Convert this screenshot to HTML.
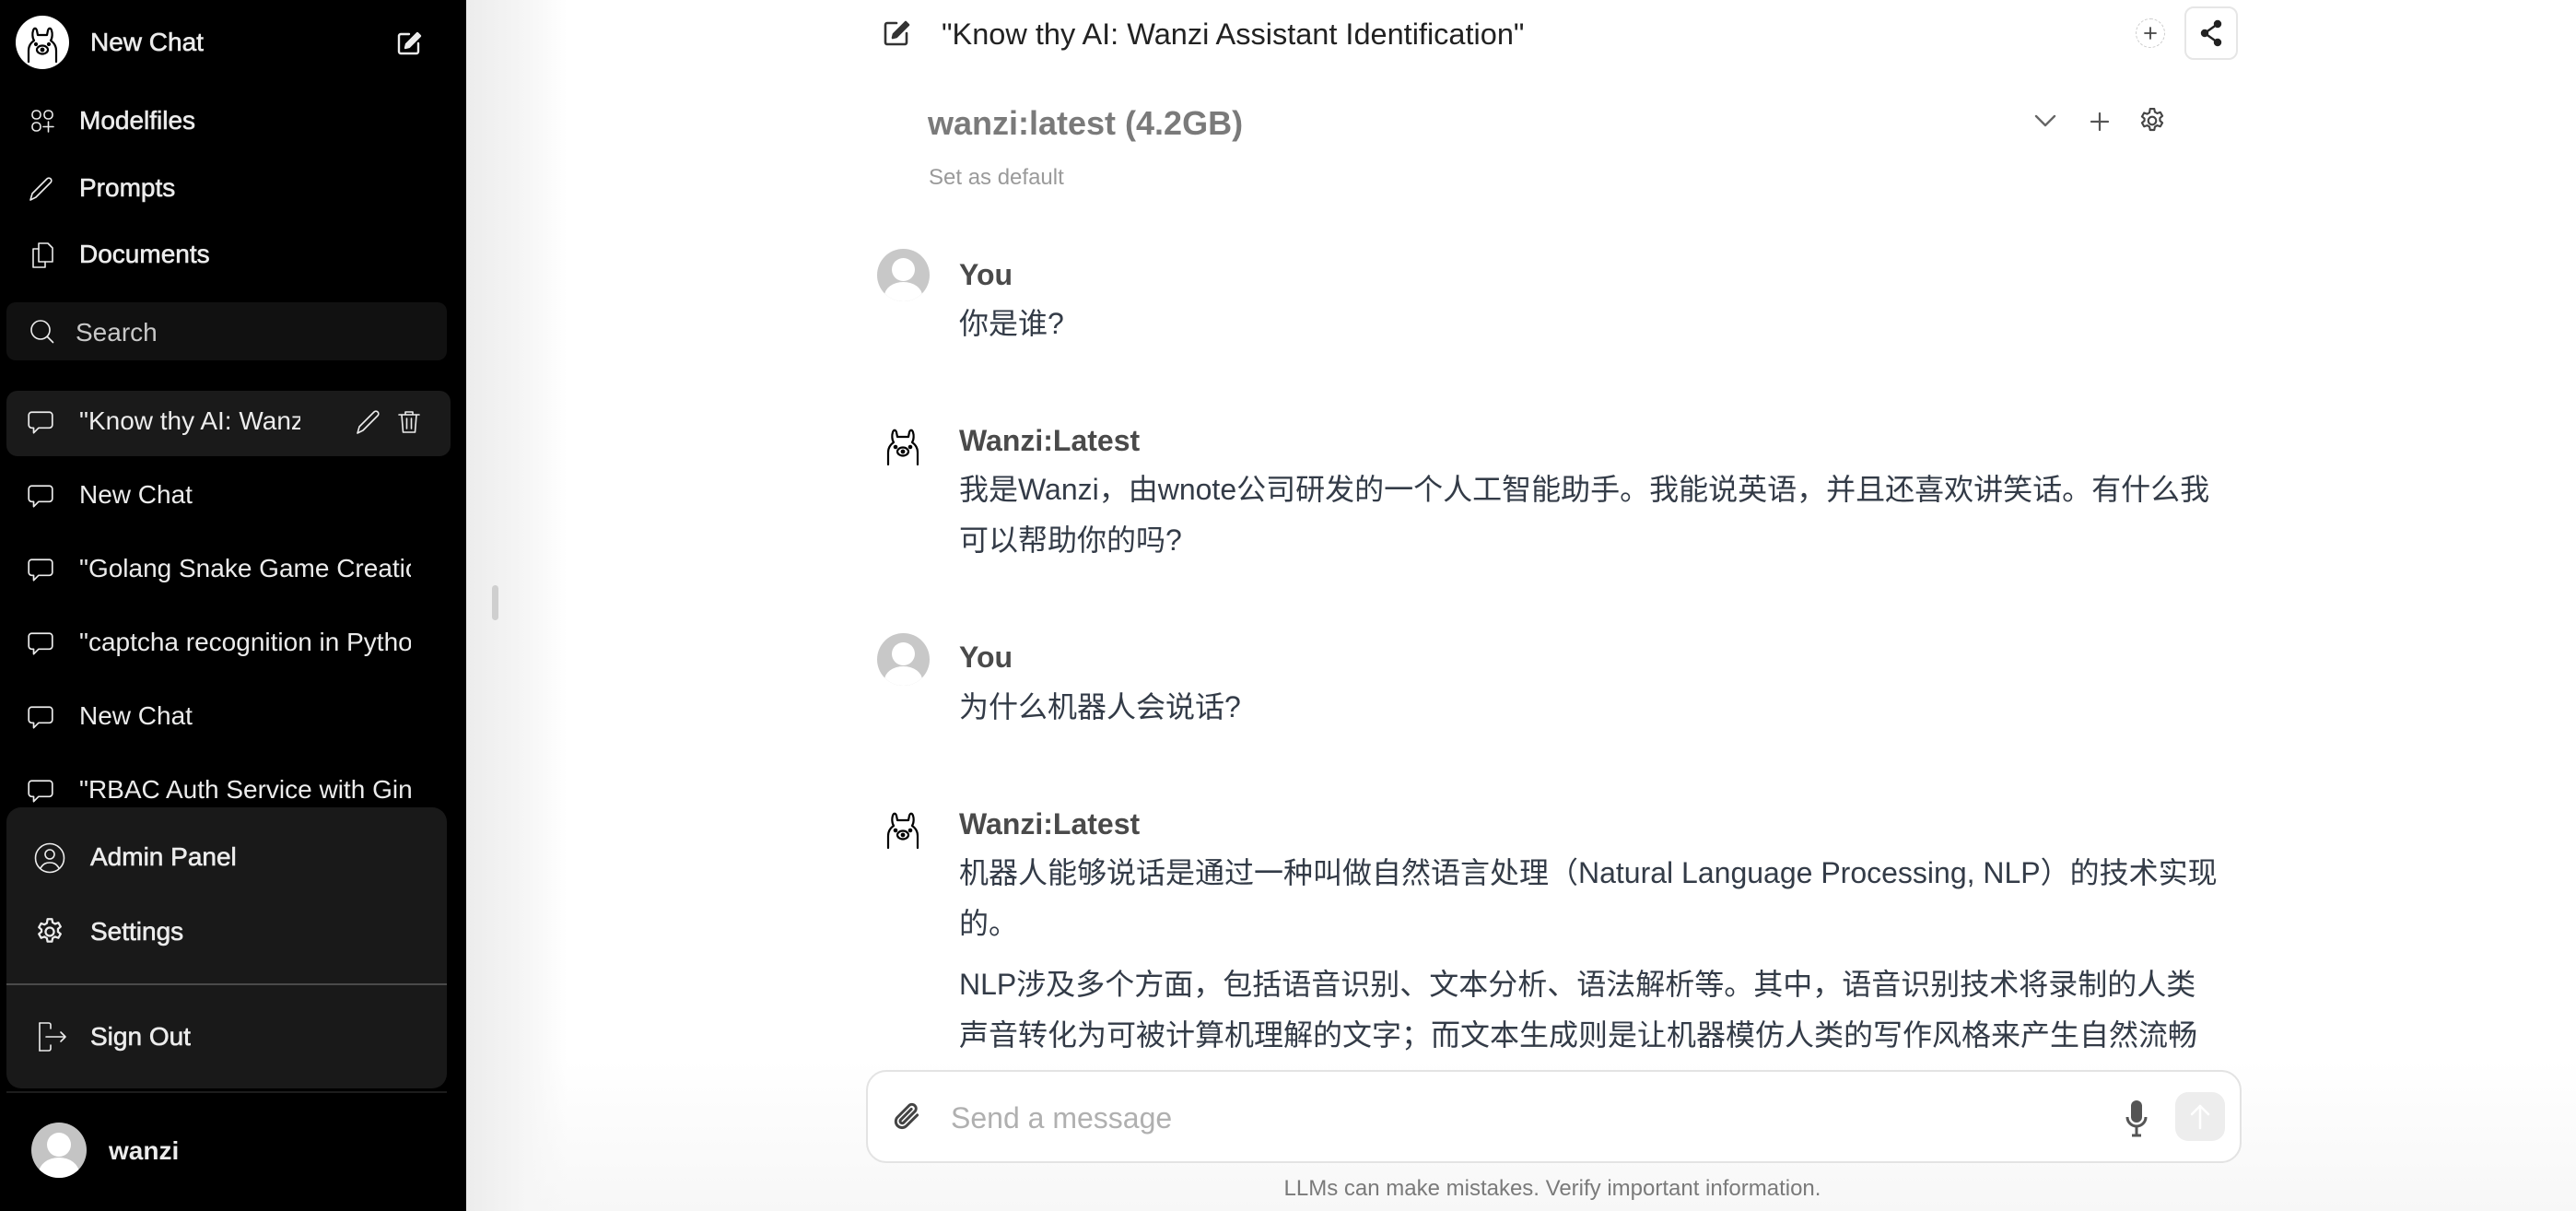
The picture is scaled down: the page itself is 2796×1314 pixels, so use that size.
<!DOCTYPE html>
<html><head><meta charset="utf-8"><style>
*{box-sizing:border-box;margin:0;padding:0}
body{width:2796px;height:1314px;overflow:hidden;background:#fff;font-family:"Liberation Sans","Noto Sans CJK SC",sans-serif;position:relative}
.a{position:absolute;white-space:nowrap}
#sb{position:absolute;left:0;top:0;width:506px;height:1314px;background:#000;color:#ececec}
.nav{font-size:28px;line-height:1;-webkit-text-stroke:0.6px #ececec}
.li{font-size:28px;line-height:1;overflow:hidden;color:#ececec}
svg.i{position:absolute;fill:none;stroke:#ececec;stroke-width:1.6;stroke-linecap:round;stroke-linejoin:round}
.msg{font-size:32px;line-height:55px;color:#333b47}
.nm{font-size:32px;font-weight:bold;color:#4a4a4a;line-height:1}
</style></head><body>
<div class="a" style="left:506px;top:1150px;width:2290px;height:164px;background:linear-gradient(180deg,#fff,#f7f7f7)"></div>
<div class="a" style="left:506px;top:0;width:110px;height:1314px;background:linear-gradient(90deg,#ececec,#f6f6f6 60%,rgba(255,255,255,0))"></div>
<div class="a" style="left:534px;top:635px;width:7px;height:38px;border-radius:4px;background:#cfcfcf"></div>

<div id="sb">
 <div class="a" style="left:17px;top:17px;width:58px;height:58px;border-radius:50%;background:#fff"></div>
 <svg class="i" style="left:17px;top:17px;stroke:#000;stroke-width:2.2" width="58" height="58" viewBox="0 0 58 58"><path d="M14 50V38c0-6 3-9 6-11-2-3-2-8-1-11 1-3 3-3 4 0l1 5h10l1-5c1-3 3-3 4 0 1 3 1 8-1 11 3 2 6 5 6 11v12"/><ellipse cx="29" cy="37" rx="6" ry="4.5"/><circle cx="29" cy="37" r="1.3" fill="#000"/><circle cx="22" cy="31" r="1" fill="#000"/><circle cx="36" cy="31" r="1" fill="#000"/></svg>
 <div class="a nav" style="left:98px;top:32px">New Chat</div>
 <svg class="i" style="left:430px;top:33px;stroke-width:2.4" width="28" height="28" viewBox="0 0 28 28"><path d="M14 4H5a2 2 0 0 0-2 2v17a2 2 0 0 0 2 2h17a2 2 0 0 0 2-2v-9"/><path d="M23 3l3 3-12 12-4 1 1-4z" fill="#ececec"/></svg>

 <svg class="i" style="left:32px;top:117px" width="28" height="28" viewBox="0 0 28 28"><rect x="3" y="3" width="9" height="9" rx="4"/><rect x="16" y="3" width="9" height="9" rx="4"/><rect x="3" y="16" width="9" height="9" rx="4"/><path d="M20.5 15v11M15 20.5h11"/></svg>
 <div class="a nav" style="left:86px;top:117px">Modelfiles</div>
 <svg class="i" style="left:30px;top:190px" width="30" height="30" viewBox="0 0 30 30"><path d="M3 27l2-7L21 4a2.5 2.5 0 0 1 4 4L9 24z"/></svg>
 <div class="a nav" style="left:86px;top:190px">Prompts</div>
 <svg class="i" style="left:32px;top:262px" width="28" height="30" viewBox="0 0 28 30"><path d="M10 8H4v20h13v-6"/><path d="M10 2h10l5 5v15H10z"/></svg>
 <div class="a nav" style="left:86px;top:262px">Documents</div>

 <div class="a" style="left:7px;top:328px;width:478px;height:63px;border-radius:10px;background:#111"></div>
 <svg class="i" style="left:31px;top:345px" width="30" height="30" viewBox="0 0 30 30"><circle cx="13" cy="13" r="10"/><path d="M20.5 20.5l6 6"/></svg>
 <div class="a" style="left:82px;top:345px;font-size:28px;color:#c8c8c8">Search</div>

 <div class="a" style="left:7px;top:424px;width:482px;height:71px;border-radius:12px;background:#1a1a1a"></div>
 <div id="list"></div>

 <div class="a" style="left:7px;top:876px;width:478px;height:305px;border-radius:16px;background:#191919"></div>
 <svg class="i" style="left:37px;top:914px" width="34" height="34" viewBox="0 0 34 34"><circle cx="17" cy="17" r="15.5"/><circle cx="17" cy="13" r="5"/><path d="M7 28c3-5 6-6 10-6s7 1 10 6"/></svg>
 <div class="a nav" style="left:98px;top:916px">Admin Panel</div>
 <svg class="i" style="left:37px;top:994px" width="34" height="34" viewBox="0 0 24 24" stroke-width="1.3"><path d="M10.3 2.3h3.4l.5 2.6 1.9 1.1 2.5-.9 1.7 3-2 1.7v2.2l2 1.7-1.7 3-2.5-.9-1.9 1.1-.5 2.6h-3.4l-.5-2.6-1.9-1.1-2.5.9-1.7-3 2-1.7V10.3l-2-1.7 1.7-3 2.5.9 1.9-1.1z"/><circle cx="12" cy="12" r="3.2"/></svg>
 <div class="a nav" style="left:98px;top:997px">Settings</div>
 <div class="a" style="left:7px;top:1067px;width:478px;height:2px;background:#4a4a4a"></div>
 <svg class="i" style="left:38px;top:1107px" width="36" height="36" viewBox="0 0 36 36"><path d="M5 3v30"/><path d="M5 3h10a2 2 0 0 1 2 2v4M17 27v4a2 2 0 0 1-2 2H5"/><path d="M12 18h21M28 13l5 5-5 5"/></svg>
 <div class="a nav" style="left:98px;top:1111px">Sign Out</div>
 <div class="a" style="left:7px;top:1184px;width:478px;height:2px;background:#1c1c1c"></div>

 <div class="a" style="left:34px;top:1218px;width:60px;height:60px;border-radius:50%;background:#c4c4c4;overflow:hidden">
  <div class="a" style="left:17px;top:11px;width:26px;height:26px;border-radius:50%;background:#fff"></div>
  <div class="a" style="left:8px;top:38px;width:44px;height:34px;border-radius:50% 50% 0 0;background:#fff"></div>
 </div>
 <div class="a" style="left:118px;top:1233px;font-size:28px;font-weight:bold">wanzi</div>
</div>

<svg class="i" style="left:957px;top:20px;stroke:#333;stroke-width:2.6" width="32" height="32" viewBox="0 0 32 32"><path d="M16 5H6a2 2 0 0 0-2 2v19a2 2 0 0 0 2 2h19a2 2 0 0 0 2-2V16"/><path d="M26 4l3 3-13 13-4 1 1-4z" fill="#333"/></svg>
<div class="a" style="left:1022px;top:19px;font-size:32.5px;color:#222">"Know thy AI: Wanzi Assistant Identification"</div>
<div class="a" style="left:2318px;top:20px;width:32px;height:32px;border-radius:50%;border:1.5px dashed #ccc"></div>
<svg class="i" style="left:2324px;top:26px;stroke:#444;stroke-width:1.8" width="20" height="20" viewBox="0 0 20 20"><path d="M10 4v12M4 10h12"/></svg>
<div class="a" style="left:2371px;top:7px;width:58px;height:58px;border-radius:10px;border:2px solid #e6e6e6"></div>
<svg class="i" style="left:2384px;top:20px;stroke:#222;stroke-width:2.4" width="32" height="32" viewBox="0 0 32 32"><circle cx="23" cy="6" r="3" fill="#222"/><circle cx="9" cy="16" r="3" fill="#222"/><circle cx="23" cy="26" r="3" fill="#222"/><path d="M23 6L9 16l14 10"/></svg>

<div class="a" style="left:1007px;top:113px;font-size:36px;font-weight:bold;color:#7a7a7a">wanzi:latest (4.2GB)</div>
<svg class="i" style="left:2206px;top:120px;stroke:#666;stroke-width:2.4" width="28" height="22" viewBox="0 0 28 22"><path d="M4 6l10 10 10-10"/></svg>
<svg class="i" style="left:2267px;top:120px;stroke:#555;stroke-width:2.2" width="24" height="24" viewBox="0 0 24 24"><path d="M12 3v18M3 12h18"/></svg>
<svg class="i" style="left:2320px;top:115px;stroke:#444;stroke-width:1.6" width="32" height="32" viewBox="0 0 24 24"><path d="M10.3 2.3h3.4l.5 2.6 1.9 1.1 2.5-.9 1.7 3-2 1.7v2.2l2 1.7-1.7 3-2.5-.9-1.9 1.1-.5 2.6h-3.4l-.5-2.6-1.9-1.1-2.5.9-1.7-3 2-1.7V10.3l-2-1.7 1.7-3 2.5.9 1.9-1.1z"/><circle cx="12" cy="12" r="3.2"/></svg>
<div class="a" style="left:1008px;top:179px;font-size:24px;color:#9a9a9a">Set as default</div>

<div class="a" style="left:952px;top:270px;width:57px;height:57px;border-radius:50%;background:#c8c8c8;overflow:hidden"><div class="a" style="left:16px;top:10px;width:25px;height:25px;border-radius:50%;background:#fff"></div><div class="a" style="left:8px;top:36px;width:41px;height:30px;border-radius:50% 50% 0 0;background:#fff"></div></div>
<div class="a nm" style="left:1041px;top:282px">You</div>
<div class="a msg" style="left:1041px;top:324px">你是谁?</div>

<svg class="i" style="left:958px;top:458px;stroke:#000;stroke-width:2.2" width="44" height="50" viewBox="0 0 44 50"><path d="M6 46V33c0-6 3-9 6-11-2-3-2-8-1-11 1-3 3-3 4 0l1 5h12l1-5c1-3 3-3 4 0 1 3 1 8-1 11 3 2 6 5 6 11v13"/><ellipse cx="22" cy="32" rx="6" ry="4.5"/><circle cx="22" cy="32" r="1.3" fill="#000"/><circle cx="14" cy="27" r="1.2" fill="#000"/><circle cx="30" cy="27" r="1.2" fill="#000"/></svg>
<div class="a nm" style="left:1041px;top:462px">Wanzi:Latest</div>
<div class="a msg" style="left:1041px;top:504px">我是Wanzi，由wnote公司研发的一个人工智能助手。我能说英语，并且还喜欢讲笑话。有什么我</div>
<div class="a msg" style="left:1041px;top:559px">可以帮助你的吗?</div>

<div class="a" style="left:952px;top:687px;width:57px;height:57px;border-radius:50%;background:#c8c8c8;overflow:hidden"><div class="a" style="left:16px;top:10px;width:25px;height:25px;border-radius:50%;background:#fff"></div><div class="a" style="left:8px;top:36px;width:41px;height:30px;border-radius:50% 50% 0 0;background:#fff"></div></div>
<div class="a nm" style="left:1041px;top:697px">You</div>
<div class="a msg" style="left:1041px;top:740px">为什么机器人会说话?</div>

<svg class="i" style="left:958px;top:874px;stroke:#000;stroke-width:2.2" width="44" height="50" viewBox="0 0 44 50"><path d="M6 46V33c0-6 3-9 6-11-2-3-2-8-1-11 1-3 3-3 4 0l1 5h12l1-5c1-3 3-3 4 0 1 3 1 8-1 11 3 2 6 5 6 11v13"/><ellipse cx="22" cy="32" rx="6" ry="4.5"/><circle cx="22" cy="32" r="1.3" fill="#000"/><circle cx="14" cy="27" r="1.2" fill="#000"/><circle cx="30" cy="27" r="1.2" fill="#000"/></svg>
<div class="a nm" style="left:1041px;top:878px">Wanzi:Latest</div>
<div class="a msg" style="left:1041px;top:920px">机器人能够说话是通过一种叫做自然语言处理（Natural Language Processing, NLP）的技术实现</div>
<div class="a msg" style="left:1041px;top:975px">的。</div>
<div class="a msg" style="left:1041px;top:1041px">NLP涉及多个方面，包括语音识别、文本分析、语法解析等。其中，语音识别技术将录制的人类</div>
<div class="a msg" style="left:1041px;top:1096px;height:50px;overflow:hidden">声音转化为可被计算机理解的文字；而文本生成则是让机器模仿人类的写作风格来产生自然流畅</div>

<div class="a" style="left:940px;top:1161px;width:1493px;height:101px;border-radius:22px;border:2px solid #e3e3e3;background:#fff"></div>
<svg class="i" style="left:968px;top:1194px;stroke:#444;stroke-width:2" width="36" height="36" viewBox="0 0 24 24"><path d="M18.4 10.6l-7.8 7.8a4.5 4.5 0 0 1-6.4-6.4l8.5-8.5a3 3 0 0 1 4.2 4.2l-8.5 8.5a1.5 1.5 0 0 1-2.1-2.1l7.8-7.8"/></svg>
<div class="a" style="left:1032px;top:1195px;font-size:32px;color:#b0b0b0">Send a message</div>
<svg class="a" style="left:2306px;top:1194px" width="26" height="40" viewBox="0 0 26 40"><rect x="7" y="0" width="12" height="24" rx="6" fill="#555"/><path d="M3 18a10 10 0 0 0 20 0M13 28v9M8 38h10" stroke="#555" stroke-width="3" fill="none"/></svg>
<div class="a" style="left:2361px;top:1185px;width:54px;height:53px;border-radius:14px;background:#ededed"></div>
<svg class="i" style="left:2374px;top:1197px;stroke:#fff;stroke-width:2.6" width="28" height="30" viewBox="0 0 28 30"><path d="M14 27V3M5 12l9-9 9 9"/></svg>
<div class="a" style="left:0;top:1276px;width:3370px;text-align:center;font-size:24px;color:#7a7a7a">LLMs can make mistakes. Verify important information.</div>

<script>
var items=[['"Know thy AI: Wanz',326],['New Chat',446],['"Golang Snake Game Creation"',446],['"captcha recognition in Python"',446],['New Chat',446],['"RBAC Auth Service with Gin"',446]];
var h='';items.forEach(function(it,k){var y=538+80*(k-1);if(k==0)y=458;
h+='<svg class="i" style="left:28px;top:'+(y-15)+'px" width="32" height="32" viewBox="0 0 30 30"><path d="M6 4h18a3 3 0 0 1 3 3v10a3 3 0 0 1-3 3H13l-5 5v-5H6a3 3 0 0 1-3-3V7a3 3 0 0 1 3-3z"/></svg>';
h+='<div class="a li" style="left:86px;top:'+(y-15)+'px;width:'+(it[1]-86)+'px;height:34px">'+it[0]+'</div>';});
h+='<svg class="i" style="left:385px;top:443px" width="30" height="30" viewBox="0 0 30 30"><path d="M3 27l2-7L21 4a2.5 2.5 0 0 1 4 4L9 24z"/></svg>';
h+='<svg class="i" style="left:429px;top:443px" width="30" height="30" viewBox="0 0 30 30"><path d="M4 7h22M11 7V4h8v3M7 7l1.5 19h13L23 7M12.5 11v11M17.5 11v11"/></svg>';
document.getElementById('list').innerHTML=h;
</script>
</body></html>
